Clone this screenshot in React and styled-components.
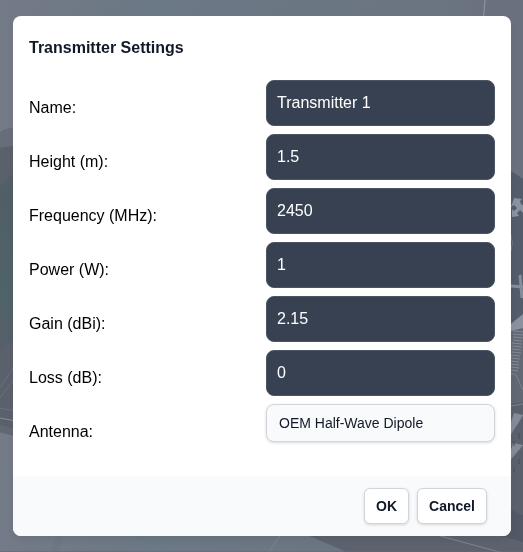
import React, { useState } from 'react';
import styled, { createGlobalStyle } from 'styled-components';

const GlobalStyle = createGlobalStyle`
  *, *::before, *::after {
    box-sizing: border-box;
  }

  body {
    margin: 0;
    background: #6b7582;
    color: #000;
    font-family: 'Liberation Sans', Arial, sans-serif;
    font-size: 16px;
    line-height: 24px;
  }
`;

const Backdrop = styled.svg`
  position: fixed;
  inset: 0;
  z-index: -1;
  width: 100%;
  height: 100%;
`;

const Page = styled.main`
  padding: 16px 12px 16px 13px;
`;

const Dialog = styled.form`
  overflow: hidden;
  border-radius: 8px;
  background: #fff;
  box-shadow: 0 4px 6px rgba(0, 0, 0, 0.06);
`;

const DialogBody = styled.div`
  padding: 20px 16px 32px;
`;

const Title = styled.h3`
  margin: 0 0 20px;
  color: #111827;
  font-size: 16px;
  font-weight: 700;
  line-height: 24px;
`;

const Fields = styled.div`
  display: grid;
  gap: 8px;
`;

const Field = styled.div`
  display: grid;
  grid-template-columns: 1fr 1fr;
  align-items: start;
  column-gap: 8px;
`;

const Label = styled.label`
  padding-top: 16px;
`;

const TextInput = styled.input`
  width: 100%;
  min-width: 0;
  margin: 0;
  padding: 10px;
  border: 1px solid #4b5563;
  border-radius: 8px;
  background: #374151;
  color: #fff;
  font: inherit;
`;

const Select = styled.select`
  appearance: none;
  width: 100%;
  min-width: 0;
  margin: 0;
  padding: 8px 12px;
  border: 1px solid #d1d5db;
  border-radius: 8px;
  background: #f9fafb;
  box-shadow: 0 1px 3px rgba(0, 0, 0, 0.15);
  color: #111827;
  font: inherit;
  font-size: 14px;
  line-height: 20px;
`;

const Footer = styled.div`
  display: flex;
  justify-content: flex-end;
  gap: 8px;
  padding: 12px 24px;
  background: #f9fafb;
`;

const Button = styled.button`
  padding: 7px 11px;
  border: 1px solid #d1d5db;
  border-radius: 6px;
  background: #fff;
  box-shadow: 0 1px 3px rgba(0, 0, 0, 0.15);
  color: #111827;
  font: inherit;
  font-size: 14px;
  font-weight: 700;
  line-height: 20px;
`;

const fields = [
  { id: 'name', label: 'Name:' },
  { id: 'height', label: 'Height (m):' },
  { id: 'frequency', label: 'Frequency (MHz):' },
  { id: 'power', label: 'Power (W):' },
  { id: 'gain', label: 'Gain (dBi):' },
  { id: 'loss', label: 'Loss (dB):' }
];

const antennas = ['OEM Half-Wave Dipole'];

// dimmed 3D view behind the dialog
const Scene = () => (
  <Backdrop
    viewBox="0 0 523 552"
    preserveAspectRatio="xMidYMid slice"
    aria-hidden="true"
  >
    <defs>
      <linearGradient id="ground" x1="0" y1="0" x2="1" y2="0">
        <stop offset="0" stopColor="#747a87" />
        <stop offset="0.3" stopColor="#6b7885" />
        <stop offset="0.8" stopColor="#6b7582" />
        <stop offset="1" stopColor="#6a707d" />
      </linearGradient>
      <linearGradient id="grass" x1="0" y1="0" x2="0" y2="1">
        <stop offset="0" stopColor="#565e6b" />
        <stop offset="0.2" stopColor="#505f66" />
        <stop offset="0.75" stopColor="#50636a" />
        <stop offset="1" stopColor="#575e6b" />
      </linearGradient>
    </defs>
    <rect width="523" height="552" fill="url(#ground)" />
    <path d="M485 0l-3 34" stroke="#9299a4" fill="none" />

    <path d="M0 133q5-6 30-7v313L0 432z" fill="#5b606d" />
    <path d="M0 133q5-6 30-7v17l-30 5z" fill="#686d7a" />
    <path d="M0 186l30-30v170L0 350z" fill="url(#grass)" />
    <path
      d="M0 388l26-40M0 398l26-35M0 408l26 5"
      stroke="#6b707d"
      fill="none"
    />
    <path d="M0 418l26 5" stroke="#868c98" strokeWidth="1" fill="none" />
    <path d="M0 425l30 7v9l-30-9z" fill="#626774" />

    <path d="M505 167l18 12v162h-18z" fill="#535c6b" />
    <path d="M505 328l18-14v238h-18z" fill="#626975" />
    <path d="M505 404l18-2v150h-18z" fill="#5b606d" />
    <g fill="#8a919f">
      <path d="M514 198l8 1-2 2 1 3 3 2v8l-4-4-3 3 2 3-7 1 0-8 2 2 3-3-3-3-3 2z" />
      <path d="M511 324l12-10v14l-12 3z" />
      <path d="M511 422l3-9 9 2-12 19z" fill="#858b98" />
      <path d="M511 450l2-7 10 2-12 14z" fill="#858b98" />
    </g>
    <path
      d="M511 286l12 1M520 275l2 23"
      stroke="#858c9a"
      strokeWidth="3"
      fill="none"
    />
    <path d="M511 235q3 8 0 16" stroke="#6d7582" fill="none" />
    <path
      d="M513 331l10 1M513 334l10 1M513 337l10 1M513 340l9 1M512 343l10 1M512 346l10 1M512 349l9 1M512 352l9 1M511 355l9 1M511 358l9 1M511 361l8 1M511 364l8 1M511 367l8 1M511 370l7 1"
      stroke="#858b98"
      fill="none"
    />
    <path
      d="M511 373l5 2 7 15M511 406l12-2M511 434l12-19M511 459l12-14"
      stroke="#7c828f"
      fill="none"
    />
    <path d="M514 441v5M519 433v6M514 467v5M519 459v5" stroke="#464d5b" />

    <path d="M305 534l46 20h180v-40H305z" fill="#5d626f" />
    <path d="M511 510l12 5v27l-30-8z" fill="#535866" />
    <path d="M281 534l-13 20M433 534l70 19" stroke="#7e8591" fill="none" />
    <path d="M60 536l-6 16" stroke="#657685" strokeWidth="8" opacity="0.4" />
    <path d="M0 552h523" stroke="#676674" />
  </Backdrop>
);

const App = () => {
  const [settings, setSettings] = useState({
    name: 'Transmitter 1',
    height: '1.5',
    frequency: '2450',
    power: '1',
    gain: '2.15',
    loss: '0',
    antenna: antennas[0]
  });

  const updateSetting = event => {
    const { name, value } = event.target;
    setSettings({ ...settings, [name]: value });
  };

  return (
    <>
      <GlobalStyle />
      <Scene />
      <Page>
        <Dialog onSubmit={event => event.preventDefault()}>
          <DialogBody>
            <Title>Transmitter Settings</Title>
            <Fields>
              {fields.map(({ id, label }) => (
                <Field key={id}>
                  <Label htmlFor={id}>{label}</Label>
                  <TextInput
                    id={id}
                    name={id}
                    value={settings[id]}
                    onChange={updateSetting}
                  />
                </Field>
              ))}
              <Field>
                <Label htmlFor="antenna">Antenna:</Label>
                <Select
                  id="antenna"
                  name="antenna"
                  value={settings.antenna}
                  onChange={updateSetting}
                >
                  {antennas.map(antenna => (
                    <option key={antenna}>{antenna}</option>
                  ))}
                </Select>
              </Field>
            </Fields>
          </DialogBody>
          <Footer>
            <Button type="submit">OK</Button>
            <Button type="button">Cancel</Button>
          </Footer>
        </Dialog>
      </Page>
    </>
  );
};

export default App;
